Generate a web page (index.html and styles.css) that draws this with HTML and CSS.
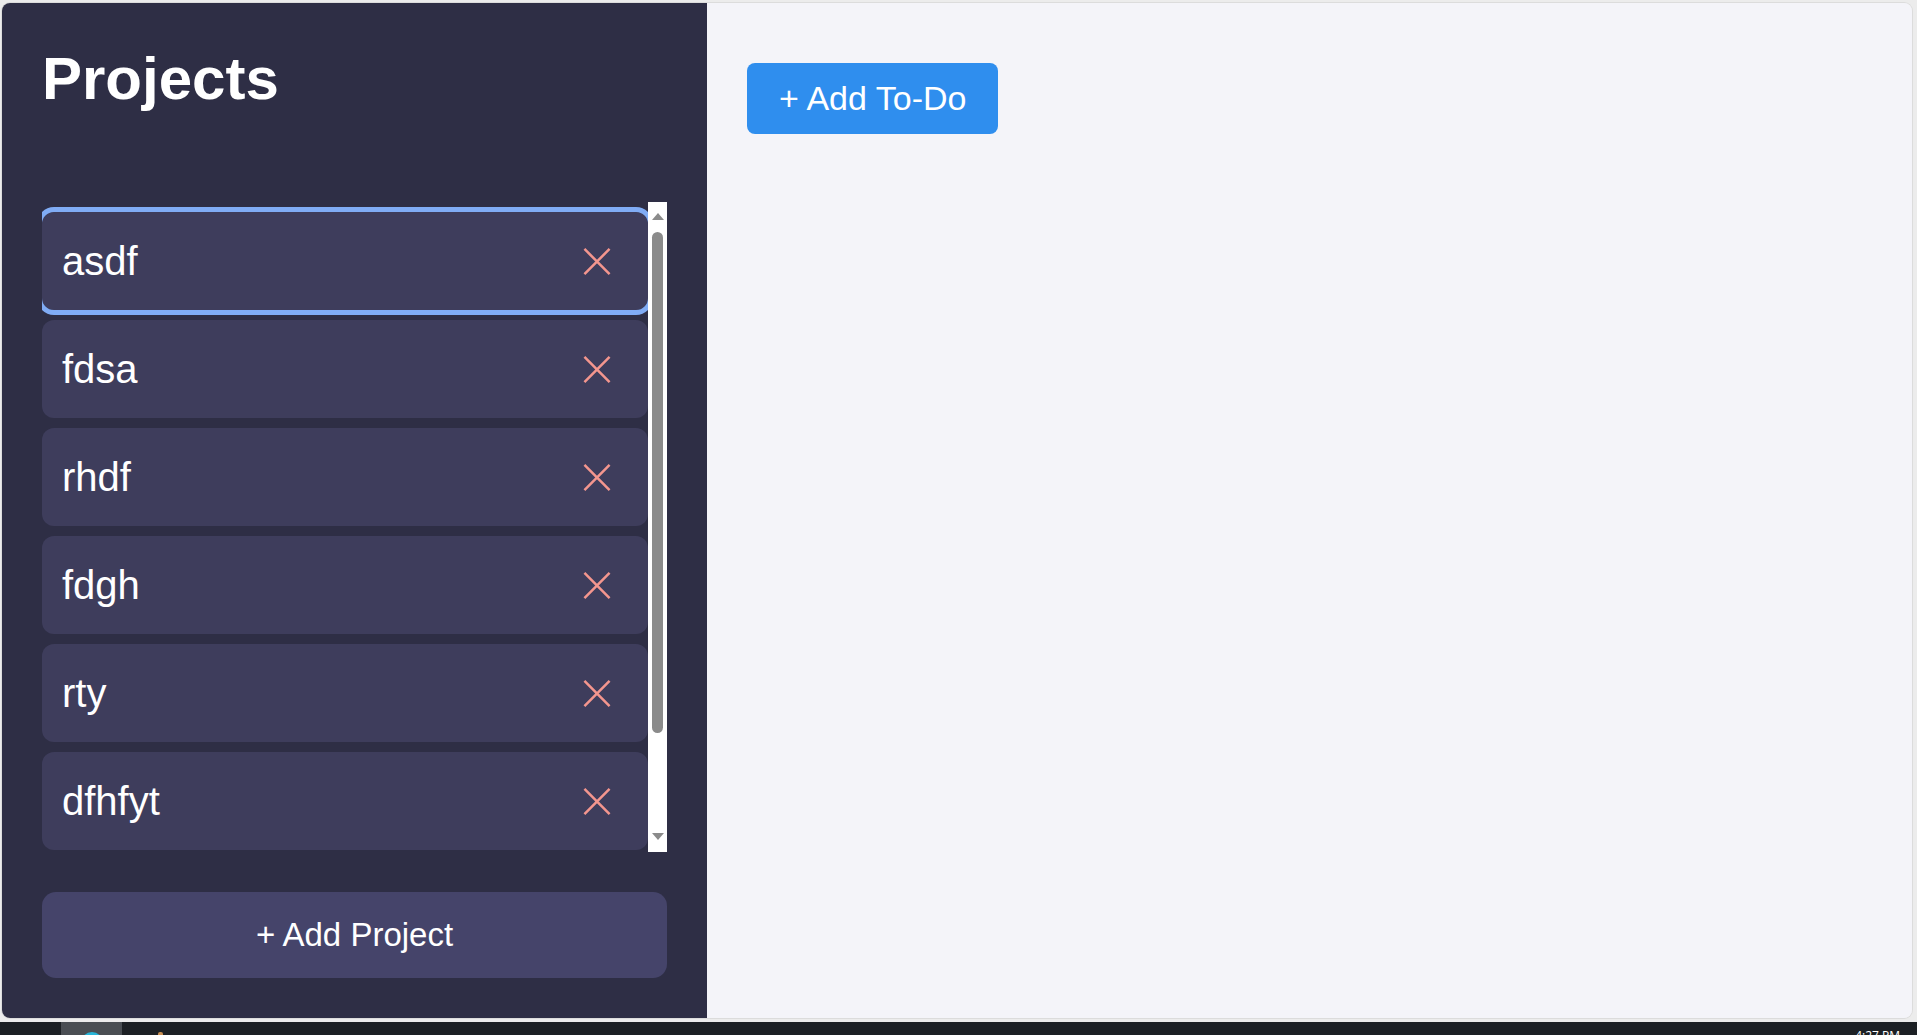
FILE: index.html
```html
<!DOCTYPE html>
<html lang="en">
<head>
<meta charset="utf-8">
<title>Projects</title>
<link rel="stylesheet" href="styles.css">
</head>
<body>
<div class="screen">
  <div class="window">
    <aside class="sidebar">
      <h1 class="title">Projects</h1>
      <div class="list-wrap">
        <div class="project-list">
          <div class="project active"><span class="name">asdf</span><button class="del" aria-label="Delete"><svg viewBox="0 0 30 30" width="30" height="29"><path d="M2 2 L28 28 M28 2 L2 28"/></svg></button></div>
          <div class="project"><span class="name">fdsa</span><button class="del" aria-label="Delete"><svg viewBox="0 0 30 30" width="30" height="29"><path d="M2 2 L28 28 M28 2 L2 28"/></svg></button></div>
          <div class="project"><span class="name">rhdf</span><button class="del" aria-label="Delete"><svg viewBox="0 0 30 30" width="30" height="29"><path d="M2 2 L28 28 M28 2 L2 28"/></svg></button></div>
          <div class="project"><span class="name">fdgh</span><button class="del" aria-label="Delete"><svg viewBox="0 0 30 30" width="30" height="29"><path d="M2 2 L28 28 M28 2 L2 28"/></svg></button></div>
          <div class="project"><span class="name">rty</span><button class="del" aria-label="Delete"><svg viewBox="0 0 30 30" width="30" height="29"><path d="M2 2 L28 28 M28 2 L2 28"/></svg></button></div>
          <div class="project"><span class="name">dfhfyt</span><button class="del" aria-label="Delete"><svg viewBox="0 0 30 30" width="30" height="29"><path d="M2 2 L28 28 M28 2 L2 28"/></svg></button></div>
        </div>
        <div class="scrollbar" aria-hidden="true">
          <span class="arrow-up"></span>
          <span class="thumb"></span>
          <span class="arrow-down"></span>
        </div>
      </div>
      <button class="add-project">+ Add Project</button>
    </aside>
    <main class="content">
      <button class="add-todo">+ Add To-Do</button>
    </main>
  </div>
  <div class="taskbar">
    <div class="task-active"><span class="task-icon"></span></div>
    <span class="task-icon2"></span>
    <span class="clock">4:27 PM</span>
  </div>
</div>
</body>
</html>
```

FILE: styles.css
```css
* { box-sizing: border-box; }

html, body {
  margin: 0;
  height: 1035px;
  overflow: hidden;
  background: #ececec;
  font-family: "Liberation Sans", Arial, sans-serif;
}

.screen {
  display: flex;
  flex-direction: column;
  height: 1035px;
}

.window {
  display: flex;
  height: 1015px;
  margin: 3px 5px 0 2px;
  border-radius: 8px;
  overflow: hidden;
  box-shadow: 0 0 0 1px #dcdcdc;
}

.sidebar {
  width: 705px;
  flex: none;
  background: #2e2e45;
  display: flex;
  flex-direction: column;
  padding: 42px 40px 40px 40px;
}

.title {
  margin: 0 0 90px 0;
  font-size: 60px;
  line-height: 67px;
  font-weight: 700;
  color: #ffffff;
}

.list-wrap {
  height: 650px;
  flex: none;
  display: flex;
}

.project-list {
  flex: 1;
  min-width: 0;
  overflow: hidden;
  display: flex;
  flex-direction: column;
  gap: 10px;
  padding: 10px 0;
}

.scrollbar {
  width: 19px;
  flex: none;
  background: #ffffff;
  display: flex;
  flex-direction: column;
  align-items: center;
  padding: 11px 0 12px;
}

.arrow-up {
  width: 0;
  height: 0;
  border-left: 6px solid transparent;
  border-right: 6px solid transparent;
  border-bottom: 7px solid #8b8b8b;
}

.thumb {
  margin-top: 12px;
  width: 11px;
  height: 501px;
  border-radius: 6px;
  background: #8b8b8b;
}

.arrow-down {
  margin-top: auto;
  width: 0;
  height: 0;
  border-left: 6px solid transparent;
  border-right: 6px solid transparent;
  border-top: 7px solid #8b8b8b;
}

.project {
  flex: none;
  height: 98px;
  display: flex;
  align-items: center;
  justify-content: space-between;
  padding: 0 36px 0 20px;
  background: #3e3d5c;
  border-radius: 12px;
  color: #ffffff;
  font-size: 40px;
}

.project.active {
  outline: 5px solid #80acf5;
}

.del {
  border: none;
  background: none;
  padding: 0;
  width: 30px;
  height: 29px;
  display: flex;
}

.del svg {
  stroke: #f4968e;
  stroke-width: 2.6;
  fill: none;
}

.add-project {
  margin-top: 40px;
  height: 86px;
  width: 100%;
  border: none;
  border-radius: 14px;
  background: #45446a;
  color: #ffffff;
  font-family: "Liberation Sans", Arial, sans-serif;
  font-size: 33px;
}

.content {
  flex: 1;
  background: #f4f4f9;
  padding: 60px 40px;
}

.add-todo {
  height: 71px;
  padding: 0 32px;
  border: none;
  border-radius: 8px;
  background: #2f8eee;
  color: #ffffff;
  font-family: "Liberation Sans", Arial, sans-serif;
  font-size: 34px;
}

.taskbar {
  margin-top: 4px;
  flex: 1;
  background: #1c2024;
  display: flex;
  align-items: flex-start;
  overflow: hidden;
  padding-left: 61px;
}

.task-active {
  width: 61px;
  height: 30px;
  background: #4a4e53;
  display: flex;
  justify-content: center;
  padding-top: 10px;
}

.task-icon {
  width: 22px;
  height: 22px;
  border-radius: 50%;
  background: #27b5d8;
}

.task-icon2 {
  margin: 10px 0 0 36px;
  width: 5px;
  height: 6px;
  background: #c98f52;
  border-radius: 2px 2px 0 0;
}

.clock {
  margin: 7px 17px 0 auto;
  font-family: "Open Sans", sans-serif;
  font-size: 12px;
  line-height: 14px;
  color: #ffffff;
}
```
